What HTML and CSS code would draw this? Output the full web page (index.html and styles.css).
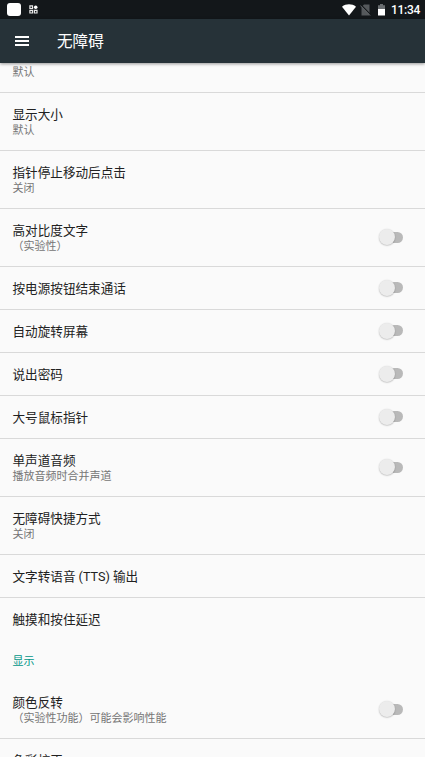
FILE: index.html
```html
<!DOCTYPE html>
<html lang="zh-CN">
<head>
<meta charset="utf-8">
<title>无障碍</title>
<link rel="stylesheet" href="styles.css">
</head>
<body>
<div class="screen">
  <div class="status">
    <span class="app-square"></span>
    <svg class="apps" width="9" height="9" viewBox="0 0 9 9" fill="none" stroke="#e8e8e8" stroke-width="1.2"><path d="M.9.9h2.6v2.6H.9zM.9 5.4h2.6V8H.9zM5.4 5.4H8V8H5.4z"/><circle cx="6.7" cy="2.2" r="1.8" fill="#fff" stroke="none"/></svg>
    <svg class="wifi" width="14" height="12" viewBox="0 0 14 12"><path d="M0 2.7C4 -.5 10-.5 14 2.7L7 11.5z" fill="#fff"/></svg>
    <svg class="sim" width="11" height="12" viewBox="0 0 11 12"><path d="M4 .5h5.5v11h-8V3z" fill="#55595c"/><path d="M.8 .6l10 10.3" stroke="#14181b" stroke-width="1.2"/><path d="M.3 1.5l9.8 10" stroke="#62666a" stroke-width="1"/></svg>
    <svg class="battery" width="7" height="12" viewBox="0 0 7 12"><path d="M0 1.3h2V0h3v1.3h2V5H0z" fill="#696d70"/><path d="M0 5h7v6.5H0z" fill="#fff"/></svg>
    <span class="clock">11:34</span>
  </div>
  <header class="appbar">
    <span class="menu"><i></i><i></i><i></i></span>
    <h1>无障碍</h1>
  </header>
  <main class="viewport">
    <div class="list">
      <div class="row tall"><div class="text"><div class="title">字体大小</div><div class="summary">默认</div></div></div>
      <div class="row tall"><div class="text"><div class="title">显示大小</div><div class="summary">默认</div></div></div>
      <div class="row tall"><div class="text"><div class="title">指针停止移动后点击</div><div class="summary">关闭</div></div></div>
      <div class="row tall"><div class="text"><div class="title">高对比度文字</div><div class="summary">（实验性）</div></div><span class="switch"></span></div>
      <div class="row"><div class="title">按电源按钮结束通话</div><span class="switch"></span></div>
      <div class="row"><div class="title">自动旋转屏幕</div><span class="switch"></span></div>
      <div class="row"><div class="title">说出密码</div><span class="switch"></span></div>
      <div class="row"><div class="title">大号鼠标指针</div><span class="switch"></span></div>
      <div class="row tall"><div class="text"><div class="title">单声道音频</div><div class="summary">播放音频时合并声道</div></div><span class="switch"></span></div>
      <div class="row tall"><div class="text"><div class="title">无障碍快捷方式</div><div class="summary">关闭</div></div></div>
      <div class="row"><div class="title">文字转语音 (TTS) 输出</div></div>
      <div class="row last"><div class="title">触摸和按住延迟</div></div>
      <div class="category">显示</div>
      <div class="row tall"><div class="text"><div class="title">颜色反转</div><div class="summary">（实验性功能）可能会影响性能</div></div><span class="switch"></span></div>
      <div class="row tall"><div class="text"><div class="title">色彩校正</div><div class="summary">关闭</div></div></div>
    </div>
  </main>
</div>
</body>
</html>
```

FILE: styles.css
```css
* { box-sizing: border-box; }

body {
  margin: 0;
  background: #fafafa;
  color: #212121;
  font-family: Roboto, "Noto Sans CJK SC", sans-serif;
}

.screen {
  width: 425px;
  height: 757px;
  display: flex;
  flex-direction: column;
  overflow: hidden;
}

.status {
  flex: none;
  height: 19px;
  padding: 0 6px 0 7px;
  display: flex;
  align-items: center;
  background: #13171a;
}

.app-square {
  width: 14px;
  height: 13px;
  border-radius: 3px;
  background: #fff;
}

.apps { margin-left: 8px; }
.wifi { margin-left: auto; }
.sim { margin-left: 4px; }
.battery { margin-left: 7px; }

.clock {
  width: 28px;
  margin-left: 6px;
  padding-top: 1px;
  color: #fff;
  font-size: 12px;
  font-weight: 500;
  line-height: 18px;
  letter-spacing: -.3px;
  white-space: nowrap;
}

.appbar {
  flex: none;
  height: 44px;
  padding-left: 15px;
  display: flex;
  align-items: center;
  background: #263238;
  box-shadow: 0 1px 3px rgba(0, 0, 0, .4);
  z-index: 1;
}

.menu {
  width: 14px;
  display: grid;
  gap: 2px;
}

.menu i {
  height: 2px;
  background: #fff;
}

h1 {
  margin: 0 0 0 28px;
  padding-top: 2px;
  color: #fff;
  font-size: 15.6px;
  font-weight: 400;
  line-height: 22px;
}

.viewport {
  flex: 1;
  min-height: 0;
  overflow: hidden;
}

.list { margin-top: -28px; }

.row {
  height: 43px;
  padding: 0 22px 0 12.5px;
  display: flex;
  align-items: center;
  justify-content: space-between;
  border-bottom: 1px solid #d9d9d9;
}

.row.tall { height: 58px; }
.row.last { border-bottom-color: transparent; }

.title {
  font-size: 12.6px;
  line-height: 17px;
}

.summary {
  color: #757575;
  font-size: 11px;
  line-height: 15px;
}

.category {
  height: 40px;
  padding-left: 12.5px;
  color: #009688;
  font-size: 11px;
  line-height: 42px;
}

.switch {
  width: 24px;
  height: 11px;
  margin-bottom: 1px;
  display: flex;
  align-items: center;
  border-radius: 6px;
  background: linear-gradient(#b9b9b9, #b9b9b9) right center / 18px 11px no-repeat;
}

.switch::before {
  content: "";
  flex: none;
  width: 16px;
  height: 16px;
  border-radius: 50%;
  background: #ececec;
  box-shadow: 0 .5px 1.5px rgba(0, 0, 0, .3);
}
```
